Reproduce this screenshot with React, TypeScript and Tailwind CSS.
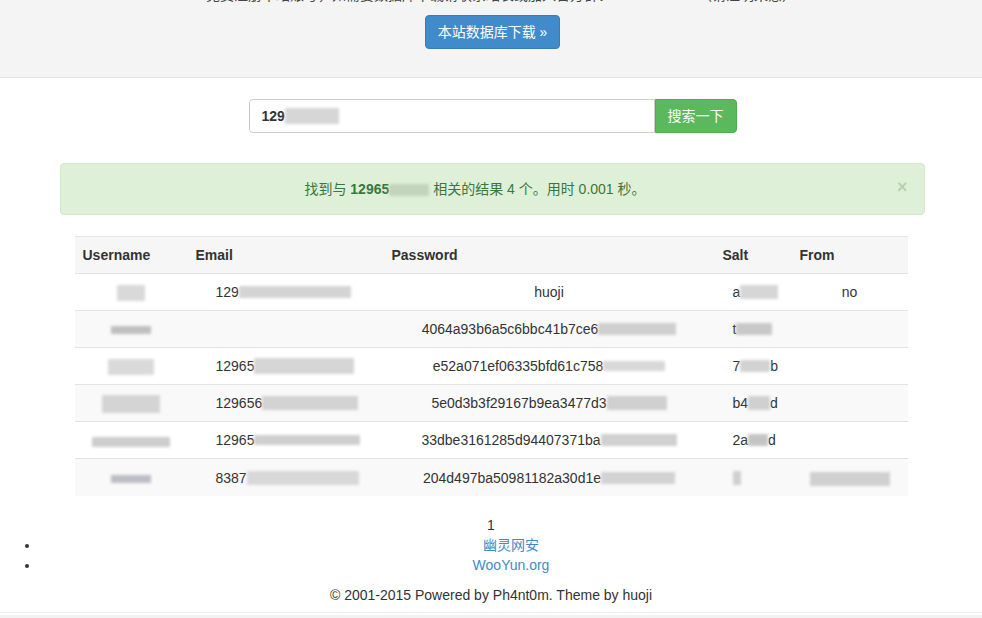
import React from "react";

const B = ({ c }: { c: string }) => (
  <span className={"inline-block align-middle blur-[1.5px] " + c} />
);

type Row = {
  user: React.ReactNode;
  email: React.ReactNode;
  pass: React.ReactNode;
  salt: React.ReactNode;
  from: React.ReactNode;
};

const rows: Row[] = [
  {
    user: <B c="w-[28px] h-[16px] bg-[#d9d9d9]" />,
    email: (
      <>
        <span>129</span>
        <B c="w-[112px] h-[12px] bg-[#d4d4d4]" />
      </>
    ),
    pass: <span>huoji</span>,
    salt: (
      <>
        <span>a</span>
        <B c="w-[38px] h-[14px] bg-[#d6d6d6]" />
      </>
    ),
    from: <span>no</span>,
  },
  {
    user: <B c="w-[40px] h-[8px] bg-[#bfbfbf]" />,
    email: <span />,
    pass: (
      <>
        <span>4064a93b6a5c6bbc41b7ce6</span>
        <B c="w-[78px] h-[12px] bg-[#cfcfcf]" />
      </>
    ),
    salt: (
      <>
        <span>t</span>
        <B c="w-[36px] h-[12px] bg-[#c8c8c8]" />
      </>
    ),
    from: <span />,
  },
  {
    user: <B c="w-[46px] h-[16px] bg-[#dadada]" />,
    email: (
      <>
        <span>12965</span>
        <B c="w-[100px] h-[16px] bg-[#d5d5d5]" />
      </>
    ),
    pass: (
      <>
        <span>e52a071ef06335bfd61c758</span>
        <B c="w-[62px] h-[10px] bg-[#d8d8d8]" />
      </>
    ),
    salt: (
      <>
        <span>7</span>
        <B c="w-[30px] h-[12px] bg-[#d2d2d2]" />
        <span>b</span>
      </>
    ),
    from: <span />,
  },
  {
    user: <B c="w-[58px] h-[18px] bg-[#d4d4d4]" />,
    email: (
      <>
        <span>129656</span>
        <B c="w-[96px] h-[14px] bg-[#d2d2d2]" />
      </>
    ),
    pass: (
      <>
        <span>5e0d3b3f29167b9ea3477d3</span>
        <B c="w-[60px] h-[14px] bg-[#cfcfcf]" />
      </>
    ),
    salt: (
      <>
        <span>b4</span>
        <B c="w-[22px] h-[14px] bg-[#d0d0d0]" />
        <span>d</span>
      </>
    ),
    from: <span />,
  },
  {
    user: <B c="w-[78px] h-[10px] bg-[#cdcdcd]" />,
    email: (
      <>
        <span>12965</span>
        <B c="w-[106px] h-[10px] bg-[#cfcfcf]" />
      </>
    ),
    pass: (
      <>
        <span>33dbe3161285d94407371ba</span>
        <B c="w-[76px] h-[12px] bg-[#d0d0d0]" />
      </>
    ),
    salt: (
      <>
        <span>2a</span>
        <B c="w-[20px] h-[12px] bg-[#c4c4c4]" />
        <span>d</span>
      </>
    ),
    from: <span />,
  },
  {
    user: <B c="w-[40px] h-[8px] bg-[#bdbdc6]" />,
    email: (
      <>
        <span>8387</span>
        <B c="w-[112px] h-[14px] bg-[#d8d8d8]" />
      </>
    ),
    pass: (
      <>
        <span>204d497ba50981182a30d1e</span>
        <B c="w-[74px] h-[12px] bg-[#d2d2d2]" />
      </>
    ),
    salt: <B c="w-[8px] h-[14px] bg-[#d0d0d0]" />,
    from: <B c="w-[80px] h-[14px] bg-[#d0d0d0]" />,
  },
];

export default function App() {
  return (
    <div className="min-h-[618px] bg-white text-[14px] leading-5 text-[#333] font-['Liberation_Sans','Noto_Sans_CJK_SC',sans-serif]">
      {/* jumbotron */}
      <div className="bg-[#f4f4f4] border-b border-[#e4e4e4] pb-[28px] flex flex-col items-center overflow-hidden">
        <div className="-mt-[15px] h-5 whitespace-nowrap flex items-center gap-0 text-[#444] pl-[20px]">
          <span>免费注册本站账号，如需要数据库下载请联系站长或加入官方群：</span>
          <span className="inline-block w-[86px]" />
          <span>（请注明来意）</span>
        </div>
        <button className="mt-[10px] ml-[3px] h-[34px] px-3 rounded-[4px] bg-[#428bca] border border-[#357ebd] text-white text-[14px]">
          本站数据库下载 »
        </button>
      </div>

      {/* search */}
      <div className="mt-[21px] flex justify-center pl-[3px]">
        <div className="w-[406px] h-[34px] border border-[#ccc] rounded-l-[4px] flex items-center pl-[12px] font-bold text-[#333]">
          <span>129</span>
          <B c="w-[54px] h-[16px] bg-[#d6d6d6]" />
        </div>
        <button className="w-[82px] h-[34px] bg-[#5cb85c] border border-[#4cae4c] rounded-r-[4px] text-white">
          搜索一下
        </button>
      </div>

      {/* alert */}
      <div className="mt-[30px] mx-auto w-[865px] relative left-[1px] bg-[#dff0d8] border border-[#d6e9c6] rounded-[4px] pt-[15px] pb-[15px] pl-[15px] pr-[49px] text-[#3c763d] text-center">
        <span>找到与 </span>
        <b>12965</b>
        <B c="w-[40px] h-[12px] bg-[#c2d4bc]" />
        <span> 相关的结果 4 个。用时 0.001 秒。</span>
        <span className="absolute right-[16px] top-[13px] text-[18px] font-bold text-[#3c763d] opacity-25">
          ×
        </span>
      </div>

      {/* table */}
      <div className="mt-[21px] mx-auto w-[833px]">
        <table className="w-full table-fixed border-collapse">
          <colgroup>
            <col className="w-[113px]" />
            <col className="w-[196px]" />
            <col className="w-[331px]" />
            <col className="w-[77px]" />
            <col className="w-[116px]" />
          </colgroup>
          <tbody>
            <tr className="bg-[#f6f6f6] border-t border-[#e6e6e6]">
              <th className="text-left px-2 py-2 h-[37px] font-bold">Username</th>
              <th className="text-left px-2 py-2 font-bold">Email</th>
              <th className="text-left px-2 py-2 font-bold">Password</th>
              <th className="text-left px-2 py-2 font-bold">Salt</th>
              <th className="text-left px-2 py-2 font-bold">From</th>
            </tr>
            {rows.map((r, i) => (
              <tr
                key={i}
                className={
                  "border-t border-[#e3e3e3] " +
                  (i % 2 === 1 ? "bg-[#f9f9f9]" : "bg-white")
                }
              >
                <td className="px-2 py-2 h-[37px] text-center whitespace-nowrap">
                  {r.user}
                </td>
                <td className="px-2 py-2 whitespace-nowrap">
                  <div className="ml-[20px] w-[144px] flex items-center">
                    {r.email}
                  </div>
                </td>
                <td className="px-2 py-2 text-center whitespace-nowrap">
                  <div className="inline-flex items-center">{r.pass}</div>
                </td>
                <td className="px-2 py-2 whitespace-nowrap">
                  <div className="ml-[10px] flex items-center">{r.salt}</div>
                </td>
                <td className="px-2 py-2 text-center whitespace-nowrap">
                  {r.from}
                </td>
              </tr>
            ))}
          </tbody>
        </table>
      </div>

      {/* footer */}
      <div className="mt-[19px] text-center">1</div>
      <ul className="list-disc pl-10 text-center">
        <li>
          <a className="text-[#428bca]">幽灵网安</a>
        </li>
        <li>
          <a className="text-[#428bca]">WooYun.org</a>
        </li>
      </ul>
      <div className="mt-[10px] text-center">
        © 2001-2015 Powered by Ph4nt0m. Theme by huoji
      </div>
      <div className="mt-[7px] border-t border-[#eeeeee] h-[3px]" />
      <div className="h-[3px] bg-[#f2f2f2]" />
    </div>
  );
}
